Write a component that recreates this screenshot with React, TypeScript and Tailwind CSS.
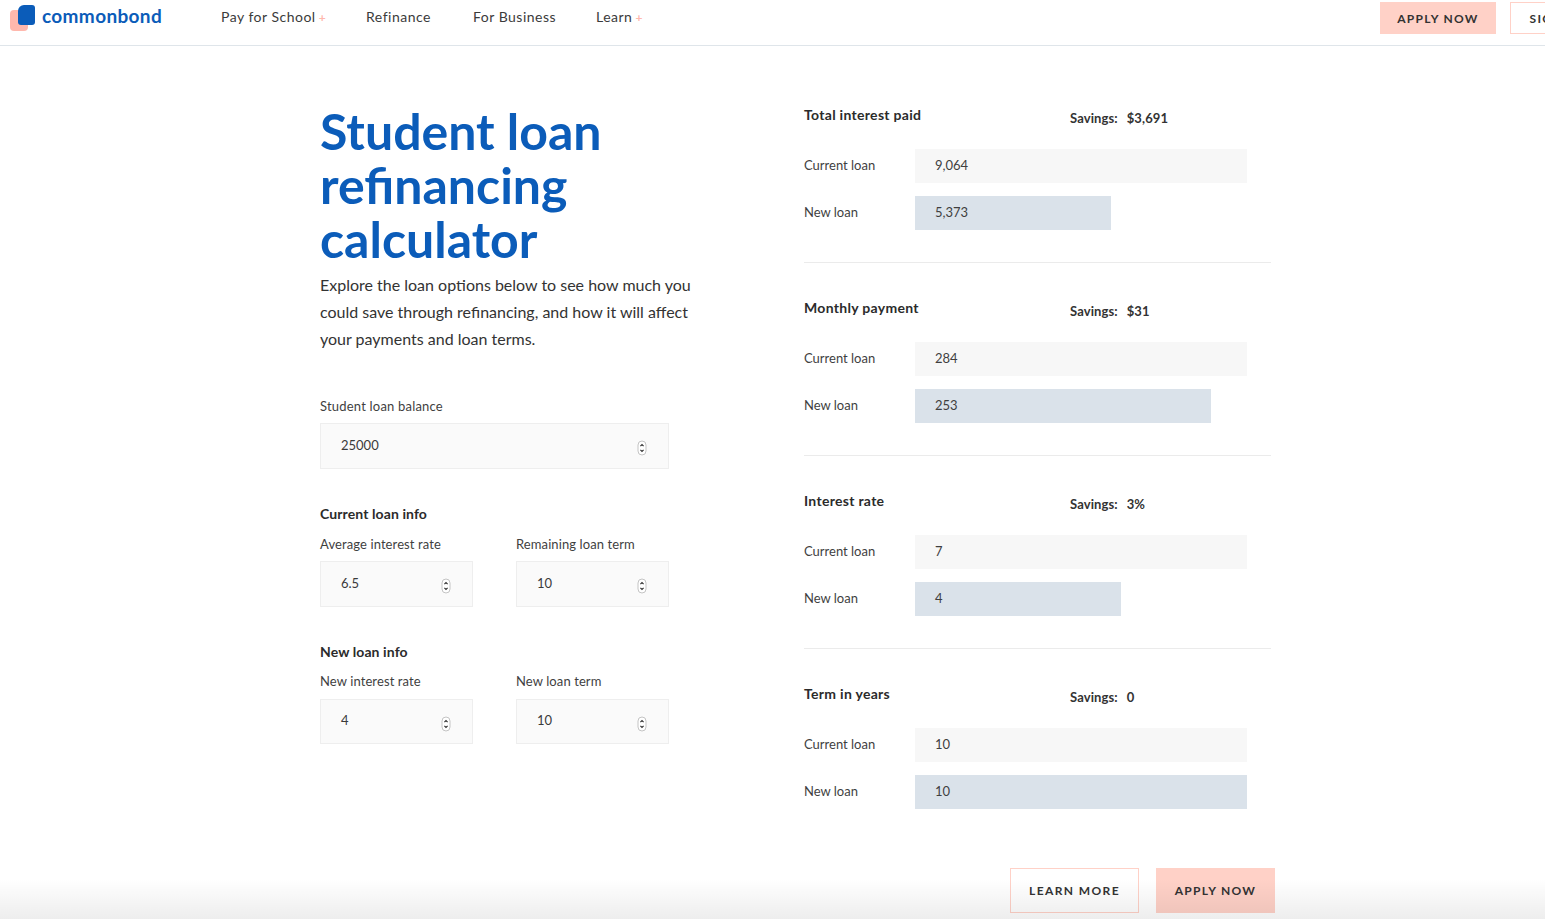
const font = "font-['Lato','Noto_Sans',sans-serif]";

const Stepper = () => (
  <svg width="10" height="16" viewBox="0 0 10 16" fill="none" className="shrink-0">
    <rect x="1" y="1" width="8" height="14" rx="4" fill="#fff" stroke="#c4c4c4" />
    <path d="M3.4 6.2 5 4.6l1.6 1.6" stroke="#333" strokeWidth="1.1" />
    <path d="M3.4 9.8 5 11.4l1.6-1.6" stroke="#333" strokeWidth="1.1" />
  </svg>
);

const NumberBox = ({ value, className }: { value: string; className: string }) => (
  <div className={`flex items-center justify-between border border-[#eeeeee] bg-[#fafafa] pl-5 pr-[21px] text-[13px] text-[#3a3a3a] ${className}`}>
    <span className="-mt-px">{value}</span>
    <span className="mt-1"><Stepper /></span>
  </div>
);

const Field = ({ label, value, boxClass }: { label: string; value: string; boxClass: string }) => (
  <div className="w-[153px]">
    <p className="text-[13px] leading-4 tracking-[0.1px] text-[#3f3f3f]">{label}</p>
    <NumberBox value={value} className={boxClass} />
  </div>
);

const Plus = () => <span className="ml-[3px] text-xs font-bold text-[#ffb8ad]">+</span>;

const NavItem = ({ label, plus, className }: { label: string; plus?: boolean; className: string }) => (
  <a className={`text-sm tracking-[0.5px] text-[#3b3b3b] ${className}`}>
    {label}
    {plus && <Plus />}
  </a>
);

const Bar = ({ label, value, width, color, className }: { label: string; value: string; width: string; color: string; className?: string }) => (
  <div className={`flex h-[34px] items-center ${className ?? ""}`}>
    <span className="w-[111px] text-[13px] text-[#3f3f3f]">{label}</span>
    <div className={`flex h-full items-center pl-5 text-[13px] text-[#3f3f3f] ${width} ${color}`}>
      <span>{value}</span>
    </div>
  </div>
);

const results = [
  { title: "Total interest paid", savings: "$3,691", current: "9,064", next: "5,373", width: "w-[196px]" },
  { title: "Monthly payment", savings: "$31", current: "284", next: "253", width: "w-[296px]" },
  { title: "Interest rate", savings: "3%", current: "7", next: "4", width: "w-[206px]" },
  { title: "Term in years", savings: "0", current: "10", next: "10", width: "w-[332px]" },
];

const ResultBlock = ({ item, last }: { item: (typeof results)[number]; last: boolean }) => (
  <section className={last ? "" : "mb-[36px] border-b border-[#ebebeb] pb-8"}>
    <div className="flex h-[18px] items-center">
      <h3 className="w-[266px] text-sm font-bold tracking-[0.3px] text-[#2b2b2b]">{item.title}</h3>
      <p className="mt-2 flex gap-[9px] text-[13px] font-bold tracking-[0.1px] text-[#333333]">
        <span>Savings:</span>
        <span>{item.savings}</span>
      </p>
    </div>
    <Bar label="Current loan" value={item.current} width="w-[332px]" color="bg-[#f7f7f7]" className="mt-[25px]" />
    <Bar label="New loan" value={item.next} width={item.width} color="bg-[#dae2ea]" className="mt-[13px]" />
  </section>
);

export default function App() {
  return (
    <div className={`relative h-[919px] w-full overflow-hidden bg-white ${font}`}>
      <header className="flex h-[46px] items-center border-b border-[#dfe5ea] pb-3">
        <div className="relative ml-[10px] mt-[5px] h-[26px] w-[25px] shrink-0 self-start">
          <div className="absolute left-0 top-[5px] h-[21px] w-[18px] rounded-[4px] bg-[#ffb8ad]" />
          <div className="absolute right-0 top-0 h-[20px] w-[17px] rounded-[3px] rounded-tl-[6px] bg-[#0b5cb9]" />
        </div>
        <span className="ml-[7px] w-[179px] text-[19px] font-bold tracking-[0.35px] text-[#0b5cb9]">commonbond</span>
        <NavItem label="Pay for School" plus className="w-[145px]" />
        <NavItem label="Refinance" className="w-[107px]" />
        <NavItem label="For Business" className="w-[123px]" />
        <NavItem label="Learn" plus className="w-[60px]" />
        <div className="-mr-[57px] ml-auto mt-[2px] flex h-8 items-center gap-[14px] self-start">
          <a className="flex h-8 w-[116px] items-center justify-center bg-[#ffd1c7] pt-0.5 text-xs font-bold tracking-[1.3px] text-[#333333]">APPLY NOW</a>
          <a className="flex h-8 w-[92px] items-center justify-center border border-[#ffd1c7] pt-0.5 text-xs font-bold tracking-[1.3px] text-[#333333]">SIGN IN</a>
        </div>
      </header>

      <main className="flex pl-[320px]">
        <div className="w-[349px] pt-[59px]">
          <h1 className="-mt-px mb-px text-[50px]/[54px] font-bold text-[#0b5cb9]">
            Student loan
            <br />
            refinancing
            <br />
            calculator
          </h1>
          <p className="mt-[5px] w-[380px] text-base/[27px] text-[#333333]">
            Explore the loan options below to see how much you could save through refinancing, and how it will affect your payments and loan terms.
          </p>
          <p className="mt-[46px] text-[13px] leading-4 tracking-[0.2px] text-[#3f3f3f]">Student loan balance</p>
          <NumberBox value="25000" className="mt-[9px] h-[46px] w-[349px]" />

          <h2 className="mt-[36px] text-sm leading-[18px] font-bold tracking-[0.1px] text-[#2b2b2b]">Current loan info</h2>
          <div className="mt-[13px] flex justify-between">
            <Field label="Average interest rate" value="6.5" boxClass="mt-[9px] h-[46px]" />
            <Field label="Remaining loan term" value="10" boxClass="mt-[9px] h-[46px]" />
          </div>

          <h2 className="mt-[36px] text-sm leading-[18px] font-bold tracking-[0.1px] text-[#2b2b2b]">New loan info</h2>
          <div className="mt-[12px] flex justify-between">
            <Field label="New interest rate" value="4" boxClass="mt-[10px] h-[45px]" />
            <Field label="New loan term" value="10" boxClass="mt-[10px] h-[45px]" />
          </div>
        </div>

        <div className="ml-[135px] w-[467px] pt-[60px]">
          {results.map((item, i) => (
            <ResultBlock key={item.title} item={item} last={i === results.length - 1} />
          ))}
          <div className="-mr-1 mt-[59px] flex justify-end gap-[17px]">
            <a className="flex h-[45px] w-[129px] items-center justify-center border border-[#ffd1c7] text-xs font-bold tracking-[1.4px] text-[#333333]">LEARN MORE</a>
            <a className="flex h-[45px] w-[119px] items-center justify-center bg-[#ffd1c7] text-xs font-bold tracking-[1.3px] text-[#333333]">APPLY NOW</a>
          </div>
        </div>
      </main>

      {/* fade along the bottom of the page */}
      <div className="pointer-events-none absolute inset-x-0 bottom-0 h-[40px] bg-gradient-to-b from-black/0 to-black/[0.07]" />
    </div>
  );
}
